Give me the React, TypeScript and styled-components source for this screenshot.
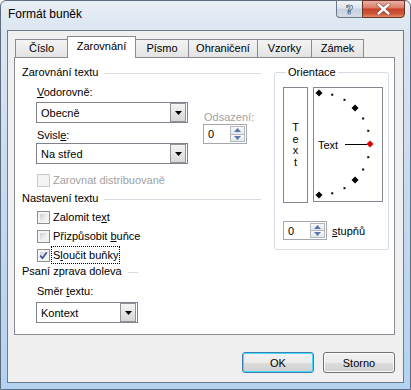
import React from 'react';
import styled, { createGlobalStyle, css } from 'styled-components';

const GlobalStyle = createGlobalStyle`
  html, body { margin: 0; padding: 0; background: #fff; }
  body {
    font-family: "Liberation Sans", Arial, sans-serif;
    font-size: 11px;
    color: #000;
  }
  * { box-sizing: border-box; }
`;

const Window = styled.div`
  width: 411px;
  height: 390px;
  display: flex;
  flex-direction: column;
  padding: 0 6px 6px 6px;
  border: 1px solid #5d6c7e;
  border-radius: 6px 6px 0 0;
  background: linear-gradient(180deg, #e8eef5 0px, #dbe6f1 30px, #c4daf0 200px, #b4d2f0 390px);
`;

const TitleBar = styled.div`
  height: 29px;
  display: flex;
  align-items: flex-start;
`;

const Title = styled.div`
  margin: 6px 0 0 1px;
  font-size: 12px;
  line-height: 15px;
  color: #000;
`;

const CaptionButtons = styled.div`
  display: flex;
  margin: -1px -1px 0 auto;
`;

const HelpButton = styled.div`
  width: 26px;
  height: 18px;
  border: 1px solid #6a7889;
  border-right: none;
  border-radius: 0 0 0 4px;
  background: linear-gradient(180deg, #f0f4f8 0%, #dde5ee 45%, #c6d2df 50%, #d3dde8 100%);
  display: flex;
  align-items: center;
  justify-content: center;
  font: bold 13px "DejaVu Sans", sans-serif;
  color: #f7f9fb;
  -webkit-text-stroke: 0.7px #3d4b5b;
`;

const CloseButton = styled.div`
  width: 43px;
  height: 18px;
  border: 1px solid #6a3329;
  border-radius: 0 0 4px 0;
  background: linear-gradient(180deg, #eab0a2 0%, #dc7d67 42%, #c7432b 50%, #cf5638 80%, #e48a66 100%);
  display: flex;
  align-items: center;
  justify-content: center;
`;

const Client = styled.div`
  flex: 1;
  display: flex;
  flex-direction: column;
  padding: 5px 8px 0 6px;
  border: 1px solid #6d7b8b;
  background: #f0f0f0;
`;

const TabStrip = styled.div`
  height: 22px;
  margin-bottom: -1px;
  padding-left: 1px;
  display: flex;
  align-items: flex-start;
  position: relative;
  z-index: 1;
`;

const Tab = styled.div<{ $w: number; $active?: boolean }>`
  width: ${(p) => p.$w}px;
  height: 18px;
  margin-top: 3px;
  border: 1px solid #898c95;
  border-bottom: none;
  display: flex;
  align-items: center;
  justify-content: center;
  padding-bottom: 1px;
  background: linear-gradient(180deg, #f3f3f3 0%, #ececec 50%, #e3e3e3 100%);
  & + & { margin-left: -1px; }
  ${(p) =>
    p.$active &&
    css`
      height: 22px;
      margin-top: 0;
      padding-bottom: 4px;
      background: #fff;
      position: relative;
      z-index: 1;
    `}
`;

const Panel = styled.div`
  width: 381px;
  height: 278px;
  display: flex;
  align-items: flex-start;
  padding: 7px 0 0 7px;
  border: 1px solid #898c95;
  background: #fff;
`;

const LeftColumn = styled.div`
  width: 239px;
  display: flex;
  flex-direction: column;
`;

const SectionHeader = styled.div<{ $mt: number; $w?: number }>`
  width: ${(p) => (p.$w ? `${p.$w}px` : '100%')};
  height: 15px;
  margin-top: ${(p) => p.$mt}px;
  display: flex;
  align-items: center;
  gap: 6px;
  line-height: 15px;
  white-space: nowrap;
  &::after {
    content: '';
    flex: 1;
    height: 1px;
    margin-top: 2px;
    background: #d5dce3;
  }
`;

const FieldLabel = styled.div<{ $mt?: number; $disabled?: boolean }>`
  height: 14px;
  line-height: 14px;
  margin-top: ${(p) => p.$mt ?? 0}px;
  margin-left: 1px;
  color: ${(p) => (p.$disabled ? '#a2a2a2' : '#000')};
  white-space: nowrap;
`;

const AlignRow = styled.div`
  display: flex;
  margin: 5px 0 0 14px;
`;

const FieldColumn = styled.div`
  display: flex;
  flex-direction: column;
`;

const Indented = styled.div<{ $mt: number }>`
  margin: ${(p) => p.$mt}px 0 0 14px;
  display: flex;
  flex-direction: column;
`;

const SelectBox = styled.div<{ $w: number; $mt: number }>`
  width: ${(p) => p.$w}px;
  height: 21px;
  margin-top: ${(p) => p.$mt}px;
  display: flex;
  align-items: stretch;
  border: 1px solid #7f848c;
  background: #fff;
`;

const SelectValue = styled.div`
  flex: 1;
  display: flex;
  align-items: center;
  padding-left: 4px;
`;

const DropButton = styled.div`
  width: 16px;
  margin-right: 1px;
  border: 1px solid #8f949b;
  background: linear-gradient(180deg, #f4f4f4 0%, #e6e6e6 50%, #d8d8d8 100%);
  display: flex;
  align-items: center;
  justify-content: center;
`;

const IndentField = styled.div`
  margin-left: 15px;
  padding-top: 25px;
  display: flex;
  flex-direction: column;
`;

const SpinBox = styled.div<{ $h: number }>`
  width: 44px;
  height: ${(p) => p.$h}px;
  display: flex;
  border: 1px solid #a3a7ae;
  background: #fff;
`;

const SpinValue = styled.div`
  flex: 1;
  display: flex;
  align-items: center;
  padding-left: 4px;
`;

const SpinButtons = styled.div`
  width: 15px;
  margin: 1px 1px 1px 0;
  display: flex;
  flex-direction: column;
`;

const SpinButton = styled.div`
  flex: 1;
  border: 1px solid #b3b8bf;
  background: linear-gradient(180deg, #f8f9fb 0%, #e3e8ef 100%);
  display: flex;
  align-items: center;
  justify-content: center;
  & + & { margin-top: -1px; }
`;

const CheckRow = styled.div<{ $mt: number }>`
  height: 16px;
  margin: ${(p) => p.$mt}px 0 0 15px;
  display: flex;
  align-items: center;
  gap: 2px;
`;

const CheckBox = styled.div<{ $disabled?: boolean }>`
  width: 13px;
  height: 13px;
  padding: 2px;
  border: 1px solid ${(p) => (p.$disabled ? '#c9c9c9' : '#8e8f8f')};
  background: ${(p) =>
    p.$disabled
      ? '#f4f4f4'
      : 'linear-gradient(135deg, #cdd0d5 0%, #eef0f2 70%, #f7f7f7 100%) content-box, #f4f4f4'};
  position: relative;
`;

const CheckLabel = styled.span<{ $disabled?: boolean; $focus?: boolean }>`
  padding: 1px 1px;
  line-height: 14px;
  color: ${(p) => (p.$disabled ? '#a2a2a2' : '#000')};
  outline: ${(p) => (p.$focus ? '1px dotted #000' : 'none')};
  white-space: nowrap;
`;

const GroupBox = styled.fieldset`
  width: 115px;
  margin: 0 0 0 13px;
  padding: 0 0 9px 8px;
  border: 1px solid #d5dce3;
  border-radius: 3px;
`;

const GroupLegend = styled.legend`
  margin-left: 3px;
  padding: 0 2px;
  line-height: 14px;
`;

const OrientRow = styled.div`
  margin-top: 8px;
  display: flex;
  gap: 5px;
`;

const VerticalTextBox = styled.div`
  width: 25px;
  height: 116px;
  border: 1px solid #828790;
  display: flex;
  flex-direction: column;
  align-items: center;
  justify-content: center;
  line-height: 11.5px;
`;

const DialBox = styled.div`
  width: 70px;
  height: 115px;
  border: 1px solid #828790;
  background: #fff;
`;

const DegreeRow = styled.div`
  margin-top: 18px;
  display: flex;
  align-items: center;
  gap: 5px;
`;

const ButtonRow = styled.div`
  margin-top: 17px;
  display: flex;
  justify-content: flex-end;
  gap: 9px;
`;

const DialogButton = styled.div<{ $default?: boolean }>`
  width: 72px;
  height: 21px;
  display: flex;
  align-items: center;
  justify-content: center;
  border: 1px solid ${(p) => (p.$default ? '#3c7fb1' : '#707070')};
  border-radius: 3px;
  background: linear-gradient(180deg, #f2f2f2 0%, #ebebeb 50%, #dddddd 51%, #cfcfcf 100%);
  box-shadow: ${(p) => (p.$default ? 'inset 0 0 0 1px #48d8fb' : 'inset 0 0 0 1px #fcfcfc')};
`;

const DownArrow = () => (
  <svg width="7" height="4" viewBox="0 0 7 4">
    <polygon points="0,0 7,0 3.5,4" fill="#000" />
  </svg>
);

const SpinArrow = ({ up }: { up?: boolean }) => (
  <svg width="7" height="4" viewBox="0 0 7 4">
    <polygon points={up ? '0,4 7,4 3.5,0' : '0,0 7,0 3.5,4'} fill="#5b77a8" />
  </svg>
);

const CheckMark = () => (
  <svg width="9" height="9" viewBox="0 0 9 9" style={{ position: 'absolute', left: 1, top: 1 }}>
    <path d="M1.2 4.6 L3.5 7.2 L7.8 1.2" fill="none" stroke="#3e5590" strokeWidth="1.7" />
  </svg>
);

const CloseGlyph = () => (
  <svg width="15" height="12" viewBox="0 0 15 12">
    <path d="M2.5 1.5 L12.5 10.5 M12.5 1.5 L2.5 10.5" stroke="#6b2a22" strokeWidth="4" strokeLinecap="round" opacity="0.55" />
    <path d="M2.5 1.5 L12.5 10.5 M12.5 1.5 L2.5 10.5" stroke="#fff" strokeWidth="2.4" strokeLinecap="round" />
  </svg>
);

const Dial = () => {
  const cx = 5;
  const cy = 56;
  const r = 51;
  const marks: React.ReactNode[] = [];
  for (let a = 90; a >= -90; a -= 15) {
    const rad = (a * Math.PI) / 180;
    const x = cx + r * Math.cos(rad);
    const y = cy - r * Math.sin(rad);
    if (a % 45 === 0) {
      const d = 3.5;
      marks.push(
        <polygon
          key={a}
          points={`${x},${y - d} ${x + d},${y} ${x},${y + d} ${x - d},${y}`}
          fill={a === 0 ? '#e00000' : '#000'}
        />
      );
    } else {
      marks.push(<rect key={a} x={x - 1} y={y - 1} width={2} height={2} fill="#000" />);
    }
  }
  return (
    <svg width="68" height="113" viewBox="0 0 68 113">
      {marks}
      <line x1="31" y1="56.5" x2="53" y2="56.5" stroke="#000" strokeWidth="1" />
      <text x="4" y="60.5" fontFamily="Liberation Sans, Arial, sans-serif" fontSize="11" fill="#000">
        Text
      </text>
    </svg>
  );
};

const Spinner = ({ h }: { h: number }) => (
  <SpinBox $h={h}>
    <SpinValue>0</SpinValue>
    <SpinButtons>
      <SpinButton>
        <SpinArrow up />
      </SpinButton>
      <SpinButton>
        <SpinArrow />
      </SpinButton>
    </SpinButtons>
  </SpinBox>
);

const Select = ({ value, w, mt }: { value: string; w: number; mt: number }) => (
  <SelectBox $w={w} $mt={mt}>
    <SelectValue>{value}</SelectValue>
    <DropButton>
      <DownArrow />
    </DropButton>
  </SelectBox>
);

const tabs = [
  { label: 'Číslo', w: 53 },
  { label: 'Zarovnání', w: 69, active: true },
  { label: 'Písmo', w: 54 },
  { label: 'Ohraničení', w: 70 },
  { label: 'Vzorky', w: 55 },
  { label: 'Zámek', w: 53 },
];

export default function App() {
  return (
    <>
      <GlobalStyle />
      <Window>
        <TitleBar>
          <Title>Formát buněk</Title>
          <CaptionButtons>
            <HelpButton>?</HelpButton>
            <CloseButton>
              <CloseGlyph />
            </CloseButton>
          </CaptionButtons>
        </TitleBar>
        <Client>
          <TabStrip>
            {tabs.map((t) => (
              <Tab key={t.label} $w={t.w} $active={t.active}>
                {t.label}
              </Tab>
            ))}
          </TabStrip>
          <Panel>
            <LeftColumn>
              <SectionHeader $mt={0}>Zarovnání textu</SectionHeader>
              <AlignRow>
                <FieldColumn>
                  <FieldLabel>
                    <u>V</u>odorovně:
                  </FieldLabel>
                  <Select value="Obecně" w={152} mt={3} />
                  <FieldLabel $mt={5}>
                    Svisl<u>e</u>:
                  </FieldLabel>
                  <Select value="Na střed" w={152} mt={1} />
                </FieldColumn>
                <IndentField>
                  <FieldLabel $disabled>Odsazení:</FieldLabel>
                  <Spinner h={20} />
                </IndentField>
              </AlignRow>
              <CheckRow $mt={8}>
                <CheckBox $disabled />
                <CheckLabel $disabled>Zarovnat distribuovaně</CheckLabel>
              </CheckRow>
              <SectionHeader $mt={3}>Nastavení textu</SectionHeader>
              <CheckRow $mt={3}>
                <CheckBox />
                <CheckLabel>
                  Zalomit te<u>x</u>t
                </CheckLabel>
              </CheckRow>
              <CheckRow $mt={3}>
                <CheckBox />
                <CheckLabel>
                  Přizpůsobit <u>b</u>uňce
                </CheckLabel>
              </CheckRow>
              <CheckRow $mt={3}>
                <CheckBox>
                  <CheckMark />
                </CheckBox>
                <CheckLabel $focus>
                  S<u>l</u>oučit buňky
                </CheckLabel>
              </CheckRow>
              <SectionHeader $mt={1} $w={116}>
                Psaní zprava doleva
              </SectionHeader>
              <Indented $mt={5}>
                <FieldLabel>
                  Směr <u>t</u>extu:
                </FieldLabel>
                <Select value="Kontext" w={102} mt={4} />
              </Indented>
            </LeftColumn>
            <GroupBox>
              <GroupLegend>Orientace</GroupLegend>
              <OrientRow>
                <VerticalTextBox>
                  <span>T</span>
                  <span>e</span>
                  <span>x</span>
                  <span>t</span>
                </VerticalTextBox>
                <DialBox>
                  <Dial />
                </DialBox>
              </OrientRow>
              <DegreeRow>
                <Spinner h={19} />
                <span>
                  <u>s</u>tupňů
                </span>
              </DegreeRow>
            </GroupBox>
          </Panel>
          <ButtonRow>
            <DialogButton $default>OK</DialogButton>
            <DialogButton>Storno</DialogButton>
          </ButtonRow>
        </Client>
      </Window>
    </>
  );
}
